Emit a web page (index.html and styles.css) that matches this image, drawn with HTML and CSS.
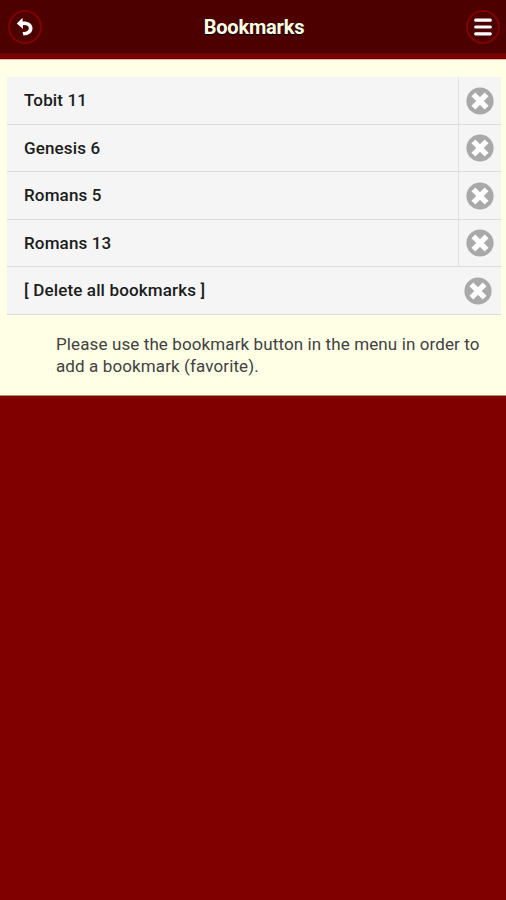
FILE: index.html
```html
<!DOCTYPE html>
<html lang="en">
<head>
<meta charset="utf-8">
<title>Bookmarks</title>
<link rel="stylesheet" href="styles.css">
</head>
<body>
<svg class="symbols" aria-hidden="true">
  <symbol id="delete" viewBox="0 0 28 28">
    <circle cx="14" cy="14" r="13.6" fill="#a9a9a9"/>
    <path d="M7.400 7.400 20.600 20.600M20.600 7.400 7.400 20.600" stroke="#fff" stroke-width="5.400"/>
  </symbol>
</svg>
<header class="header">
  <button class="round-button" aria-label="Back">
    <svg width="18" height="20" viewBox="0 0 18 20"><path d="M.8 6.500 6.600 .8v3.700C12.300 4.200 16.500 6.800 16.500 11.200c0 4.400-3.700 7.200-9.100 7.200l-.8-3.300c3.900.1 6.200-1.500 6.200-3.900 0-2.300-2.200-3.400-5.800-3.200v4.100z" fill="#fff"/></svg>
  </button>
  <h1 class="title">Bookmarks</h1>
  <button class="round-button" aria-label="Menu">
    <svg width="18" height="18" viewBox="0 0 18 18"><path d="M1.700 2.200H16.300M1.700 9H16.300M1.700 15.800H16.300" stroke="#fff" stroke-width="3.200" stroke-linecap="round"/></svg>
  </button>
</header>
<main class="content">
  <ul class="list">
    <li class="row"><a class="label">Tobit 11</a><a class="remove"><svg class="icon"><use href="#delete"/></svg></a></li>
    <li class="row"><a class="label">Genesis 6</a><a class="remove"><svg class="icon"><use href="#delete"/></svg></a></li>
    <li class="row"><a class="label">Romans 5</a><a class="remove"><svg class="icon"><use href="#delete"/></svg></a></li>
    <li class="row"><a class="label">Romans 13</a><a class="remove"><svg class="icon"><use href="#delete"/></svg></a></li>
    <li class="row row-all"><a class="label">[ Delete all bookmarks ]</a><a class="remove"><svg class="icon"><use href="#delete"/></svg></a></li>
  </ul>
  <p class="hint">Please use the bookmark button in the menu in order to add a bookmark (favorite).</p>
</main>
</body>
</html>
```
FILE: styles.css
```css
* { box-sizing: border-box; }
body {
  margin: 0;
  min-height: 900px;
  background: #800000;
  font-family: Roboto, "Liberation Sans", sans-serif;
}
.symbols { display: none; }
.header {
  height: 59px;
  padding: 0 6px 0 8px;
  display: flex;
  align-items: center;
  justify-content: space-between;
  background: #4d0000;
  border-bottom: 6px solid #780000;
}
.title {
  margin: 0;
  color: #ffffe6;
  font-size: 20px;
  line-height: 24px;
  font-weight: 700;
  letter-spacing: -.2px;
  text-shadow: 0 1px 1px #000;
}
.round-button {
  width: 34px;
  height: 34px;
  padding: 0;
  display: flex;
  align-items: center;
  justify-content: center;
  border: 2px solid #800000;
  border-radius: 50%;
  background: #4d0000;
}
.content {
  height: 337px;
  padding: 17px 5px 0 7px;
  background: #ffffe6;
  border-top: 1px solid #dfb9a8;
  border-bottom: 1px solid #b78b7e;
}
.list {
  margin: 0;
  padding: 0;
  list-style: none;
  background: #f5f5f5;
}
.row {
  height: 47.5px;
  display: flex;
  border-bottom: 1px solid #dcdcdc;
}
.label {
  flex: 1;
  padding-left: 17px;
  color: #1c1c1c;
  font-size: 17px;
  line-height: 46.8px;
  font-weight: 500;
  letter-spacing: .15px;
}
.remove {
  width: 43px;
  padding-top: 1px;
  display: flex;
  align-items: center;
  justify-content: center;
  border-left: 1px solid #e3e3e3;
}
.row-all .remove { width: 47px; border-left: 0; }
.icon { width: 28px; height: 28px; }
.hint {
  margin: 18px 12px 0 49px;
  color: #414141;
  font-size: 17px;
  line-height: 22px;
  letter-spacing: .11px;
}
```
